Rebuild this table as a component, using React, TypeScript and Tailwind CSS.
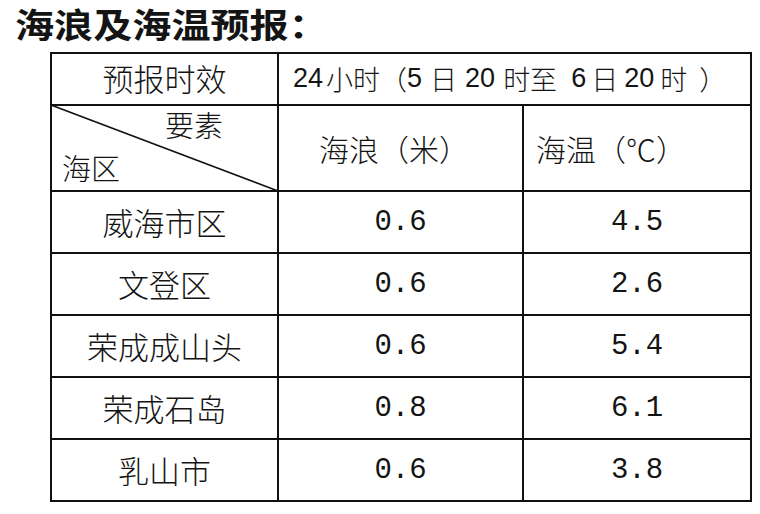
import React from "react";

const cjk = "font-['Noto_Sans_CJK_SC',sans-serif]";
const mono = "font-['Liberation_Mono','Noto_Sans_CJK_SC',monospace]";
const lat = "font-['Liberation_Sans','Noto_Sans_CJK_SC',sans-serif]";

const rows: [string, string, string][] = [
  ["威海市区", "0.6", "4.5"],
  ["文登区", "0.6", "2.6"],
  ["荣成成山头", "0.6", "5.4"],
  ["荣成石岛", "0.8", "6.1"],
  ["乳山市", "0.6", "3.8"],
];

export default function App() {
  return (
    <div className={`w-[760px] h-[514px] bg-white text-[#141414] overflow-hidden ${cjk}`}>
      <div className="h-[52px] pl-[15px] pt-[5px]">
        <div className="inline-block origin-left scale-x-[1.15] text-[34px] leading-[38px] font-bold whitespace-nowrap">
          海浪及海温预报：
        </div>
      </div>
      <div className="ml-[50px] w-[702px] grid grid-cols-[225px_243px_226px] grid-rows-[50px_84px_60px_60px_60px_60px_60px] gap-[2px] bg-[#111] border-2 border-[#111] font-light">
        <div className="bg-white flex items-center justify-center pb-[3px] text-[31px] leading-none">预报时效</div>
        <div className="col-span-2 bg-white flex items-center pl-[14px] pb-[2px] text-[27px] leading-none whitespace-nowrap">
          <span className={lat}>24</span>
          <span className="ml-[3px]">小时（</span>
          <span className={lat}>5</span>
          <span className="ml-[8px]">日</span>
          <span className={`ml-[8px] ${lat}`}>20</span>
          <span className="ml-[8px]">时至</span>
          <span className={`ml-[14px] ${lat}`}>6</span>
          <span className="ml-[5px]">日</span>
          <span className={`ml-[6px] ${lat}`}>20</span>
          <span className="ml-[6px]">时</span>
          <span className="ml-[12px]">）</span>
        </div>

        <div className="relative bg-white flex flex-col justify-between pt-[4px] pb-[8px] text-[29px] leading-none">
          <svg className="absolute inset-0 w-full h-full" viewBox="0 0 225 84" preserveAspectRatio="none">
            <line x1="-1" y1="-1" x2="226" y2="85" stroke="#111" strokeWidth="1.6" />
          </svg>
          <div className="self-end mr-[54px]">要素</div>
          <div className="self-start ml-[10px]">海区</div>
        </div>
        <div className="bg-white flex items-center pl-[40px] text-[30px] leading-none whitespace-nowrap">海浪（米）</div>
        <div className="bg-white flex items-center pl-[12px] text-[30px] leading-none whitespace-nowrap">海温（℃）</div>

        {rows.map(([name, wave, temp]) => (
          <React.Fragment key={name}>
            <div className="bg-white flex items-center justify-center pb-[2px] text-[31px] leading-none whitespace-nowrap">{name}</div>
            <div className={`bg-white flex items-center justify-center text-[29px] leading-none ${mono}`}>{wave}</div>
            <div className={`bg-white flex items-center justify-center text-[29px] leading-none ${mono}`}>{temp}</div>
          </React.Fragment>
        ))}
      </div>
    </div>
  );
}
